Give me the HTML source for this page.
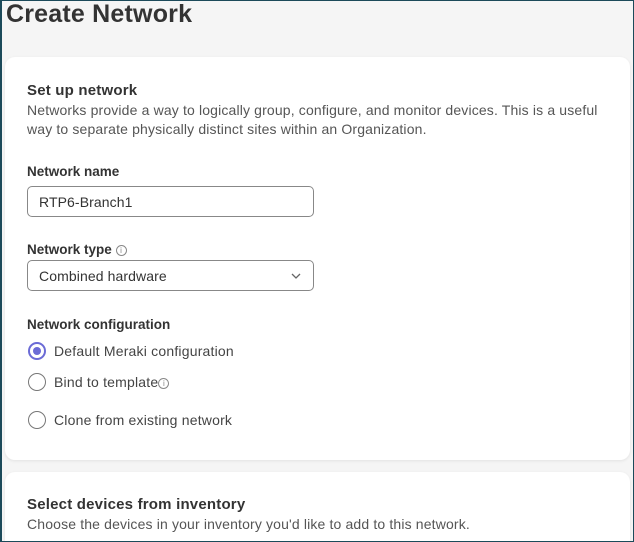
<!DOCTYPE html>
<html><head><meta charset="utf-8"><style>
*{box-sizing:border-box;margin:0;padding:0}
html,body{width:634px;height:542px;overflow:hidden}
body{background:#f5f5f5;font-family:"Liberation Sans",sans-serif;color:#333;position:relative}
.frame{position:absolute;inset:0;border:1px solid #1c4a5a;border-left-width:2px;z-index:10;pointer-events:none}
h1{position:absolute;left:6px;top:0px;font-size:25px;font-weight:bold;color:#333;letter-spacing:0.2px}
.card{position:absolute;left:5px;right:4px;background:#fff;border-radius:10px;box-shadow:0 1px 3px rgba(0,0,0,0.08)}
.t{position:absolute;left:27px;font-size:15px;font-weight:bold;color:#333;letter-spacing:0.2px}
.p{position:absolute;left:27px;font-size:14px;color:#555;line-height:19px;letter-spacing:0.15px}
.l{position:absolute;left:27px;font-size:13.5px;font-weight:bold;color:#333}
.inp{position:absolute;left:27px;width:287px;height:31px;border:1.5px solid #888;border-radius:5px;font-size:14px;padding:7px 11px;color:#333;letter-spacing:0.1px}
.r{position:absolute;left:28px;width:18px;height:18px;border:1.5px solid #777;border-radius:50%}
.rl{position:absolute;left:54px;font-size:14px;color:#444;letter-spacing:0.2px}
.i{display:inline-block;width:11px;height:11px;border:1px solid #888;border-radius:50%;font-size:8px;text-align:center;line-height:10px;color:#888;vertical-align:1px;font-weight:normal;letter-spacing:0}
</style></head><body>
<div class="frame"></div>
<h1>Create Network</h1>
<div class="card" style="top:57px;height:403px"></div>
<div class="card" style="top:472px;height:80px"></div>
<div class="t" style="top:82px">Set up network</div>
<div class="p" style="top:101px">Networks provide a way to logically group, configure, and monitor devices. This is a useful<br>way to separate physically distinct sites within an Organization.</div>
<div class="l" style="top:164px">Network name</div>
<div class="inp" style="top:186px">RTP6-Branch1</div>
<div class="l" style="top:242px">Network type <span class="i">i</span></div>
<div class="inp" style="top:260px">Combined hardware<svg style="position:absolute;right:12px;top:12px" width="10" height="6" viewBox="0 0 10 6"><path d="M1 1l4 4 4-4" fill="none" stroke="#666" stroke-width="1.3"/></svg></div>
<div class="l" style="top:317px">Network configuration</div>
<div class="r" style="top:342px;border:2px solid #6b6bd6"><div style="position:absolute;left:3px;top:3px;width:8px;height:8px;border-radius:50%;background:#6b6bd6"></div></div>
<div class="rl" style="top:343px">Default Meraki configuration</div>
<div class="r" style="top:373px"></div>
<div class="rl" style="top:374px">Bind to template<span class="i">i</span></div>
<div class="r" style="top:411px"></div>
<div class="rl" style="top:412px">Clone from existing network</div>
<div class="t" style="top:496px">Select devices from inventory</div>
<div class="p" style="top:515px">Choose the devices in your inventory you'd like to add to this network.</div>
</body></html>
